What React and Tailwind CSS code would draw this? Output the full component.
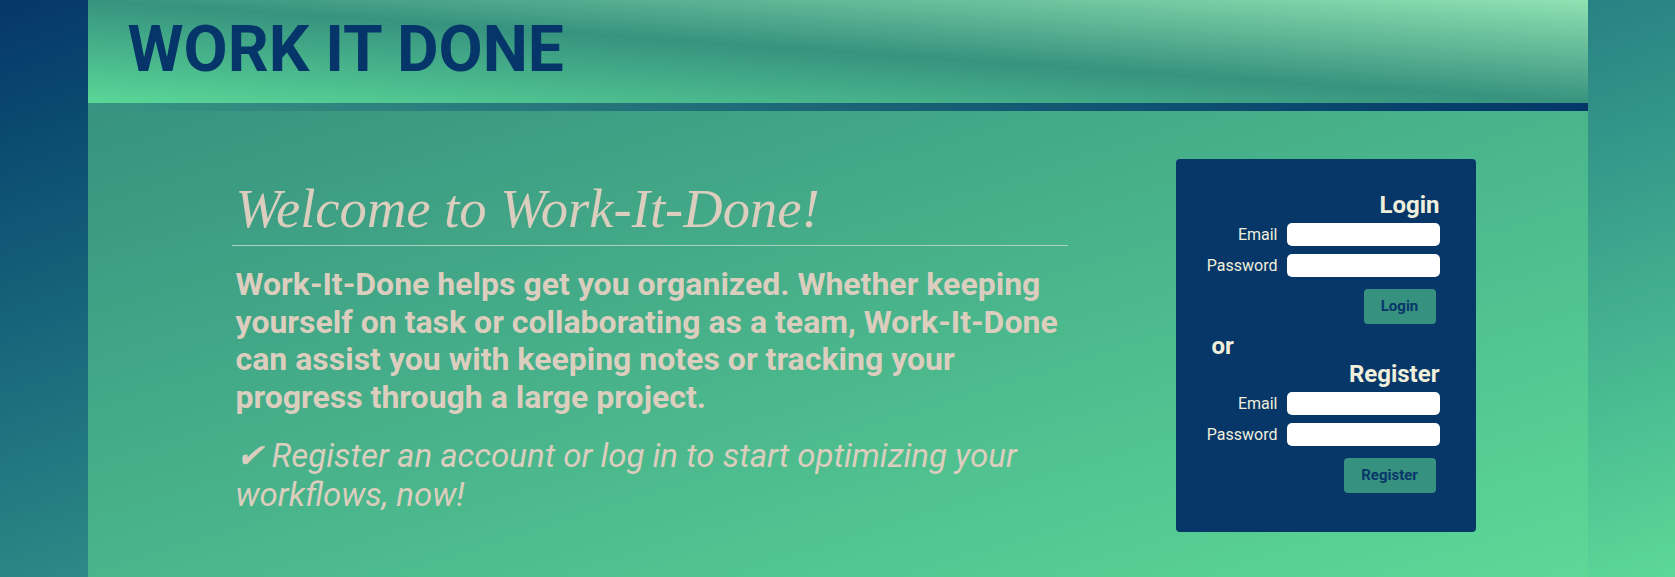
import React from "react";

function Field({ label }) {
  return (
    <div className="flex items-center justify-end gap-[9px]">
      <label className="text-[16px] leading-[20px] text-[#f0efdc]">{label}</label>
      <input
        type={label === "Password" ? "password" : "text"}
        className="h-[23px] w-[153px] rounded-[5px] bg-white px-2 text-[14px] text-black outline-none"
      />
    </div>
  );
}

export default function App() {
  return (
    <div className="min-h-screen w-full bg-linear-to-br from-[#063769] to-[#5cd897] font-['Roboto',sans-serif]">
      <div className="mx-auto flex min-h-screen w-[1500px] flex-col">
        <header className="h-[103px] bg-linear-to-tr from-[#5ad797] via-[#37937f] to-[#8fe2b2] pl-10">
          <h1 className="pt-[12px] text-[64px] font-bold leading-[75px] text-[#063669]">
            WORK IT DONE
          </h1>
        </header>
        <div className="h-2 bg-linear-to-r from-[#3a9482] to-[#053668]" />
        <main className="flex flex-1 items-start gap-[108px] bg-linear-to-br from-[#37937f] to-[#5dd897] pl-[144px] pt-[48px]">
          <section className="w-[836px] pt-[20px]">
            <h2 className="pl-[4px] font-['Liberation_Serif',serif] text-[54.6px] italic leading-[60px] text-[#dccebe]">
              Welcome to Work-It-Done!
            </h2>
            <hr className="mt-[6px] border-t border-[#a9d3bd]" />
            <p className="mt-[20px] pl-[4px] text-[32px] font-bold leading-[37.5px] text-[#dccebe]">
              Work-It-Done helps get you organized. Whether keeping yourself on
              task or collaborating as a team, Work-It-Done can assist you with
              keeping notes or tracking your progress through a large project.
            </p>
            <p className="mt-[21px] pl-[4px] text-[33px] font-normal italic leading-[38.7px] text-[#dccebe]">
              ✔ Register an account or log in to start optimizing your
              workflows, now!
            </p>
          </section>
          <aside className="w-[300px] rounded bg-[#063768] px-9 pb-[39px] pt-8">
            <h3 className="text-right text-[24px] font-bold leading-[28px] text-[#f0efdc]">
              Login
            </h3>
            <div className="mt-1 flex flex-col gap-2">
              <Field label="Email" />
              <Field label="Password" />
            </div>
            <div className="mt-3 flex justify-end pr-1">
              <button className="h-[35px] w-[72px] rounded-sm bg-[#37917f] text-[15px] font-bold text-[#073669]">
                Login
              </button>
            </div>
            <div className="mt-2 text-[24px] font-bold leading-[28px] text-[#f0efdc]">or</div>
            <h3 className="text-right text-[24px] font-bold leading-[28px] text-[#f0efdc]">
              Register
            </h3>
            <div className="mt-1 flex flex-col gap-2">
              <Field label="Email" />
              <Field label="Password" />
            </div>
            <div className="mt-3 flex justify-end pr-1">
              <button className="h-[35px] w-[92px] rounded-sm bg-[#37917f] text-[15px] font-bold text-[#073669]">
                Register
              </button>
            </div>
          </aside>
        </main>
      </div>
    </div>
  );
}
